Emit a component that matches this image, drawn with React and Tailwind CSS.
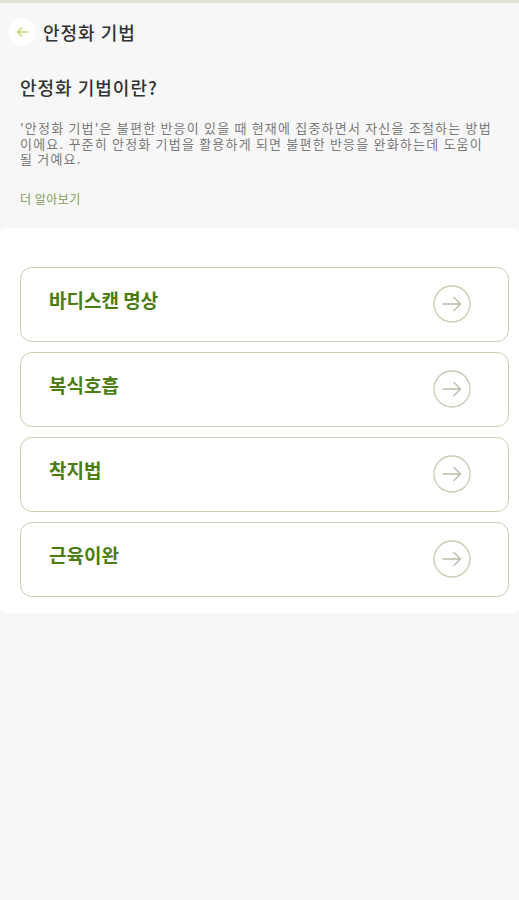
const items = ["바디스캔 명상", "복식호흡", "착지법", "근육이완"];

const ArrowCircle = () => (
  <svg width="38" height="38" viewBox="0 0 38 38" fill="none">
    <circle cx="19" cy="19" r="18" stroke="#c9cbb4" strokeWidth="1.3" />
    <path d="M10 19h17M21 12.5l6.5 6.5-6.5 6.5" stroke="#b9bca6" strokeWidth="1.3" strokeLinecap="round" strokeLinejoin="round" />
  </svg>
);

const TechniqueCard = ({ title }) => (
  <div className="flex items-center justify-between h-[75px] rounded-[12px] border border-[#c8ccb4] bg-white pl-[28px] pr-[37px]">
    <span className="text-[19px] font-bold text-[#4b7d12] -mt-[8px]">{title}</span>
    <ArrowCircle />
  </div>
);

export default function App() {
  return (
    <div
      className="min-h-[900px] bg-[#f7f7f7] border-t-[3px] border-[#e2e2da]"
      style={{ fontFamily: '"Noto Sans CJK KR", "Noto Sans", sans-serif' }}
    >
      <header className="flex items-center gap-[7px] h-[58px] pl-[8px]">
        <div className="w-[28px] h-[28px] rounded-full bg-white flex items-center justify-center">
          <svg width="14" height="14" viewBox="0 0 14 14" fill="none">
            <path d="M12 7H2.5M6.5 3L2.5 7l4 4" stroke="#c4d67a" strokeWidth="1.6" strokeLinecap="round" strokeLinejoin="round" />
          </svg>
        </div>
        <h1 className="text-[18px] font-medium tracking-[1px] text-[#333]">안정화 기법</h1>
      </header>

      <section className="pl-[20px] pr-[24px] pt-[13px]">
        <h2 className="text-[18px] font-medium tracking-[1px] text-[#333] leading-[26px]">안정화 기법이란?</h2>
        <p className="mt-[20px] text-[13px] leading-[15.5px] tracking-[1.2px] text-[#7a7a7a]">
          '안정화 기법'은 불편한 반응이 있을 때 현재에 집중하면서 자신을 조절하는 방법이에요. 꾸준히 안정화 기법을 활용하게 되면 불편한 반응을 완화하는데 도움이 될 거예요.
        </p>
        <div className="mt-[23px] text-[12px] tracking-[0.5px] text-[#7f9a5a]">더 알아보기</div>
      </section>

      <div className="mt-[20px] bg-white rounded-[6px] pt-[39px] pb-[16px] pl-[20px] pr-[10px] flex flex-col gap-[10px]">
        {items.map((t) => (
          <TechniqueCard key={t} title={t} />
        ))}
      </div>
    </div>
  );
}
